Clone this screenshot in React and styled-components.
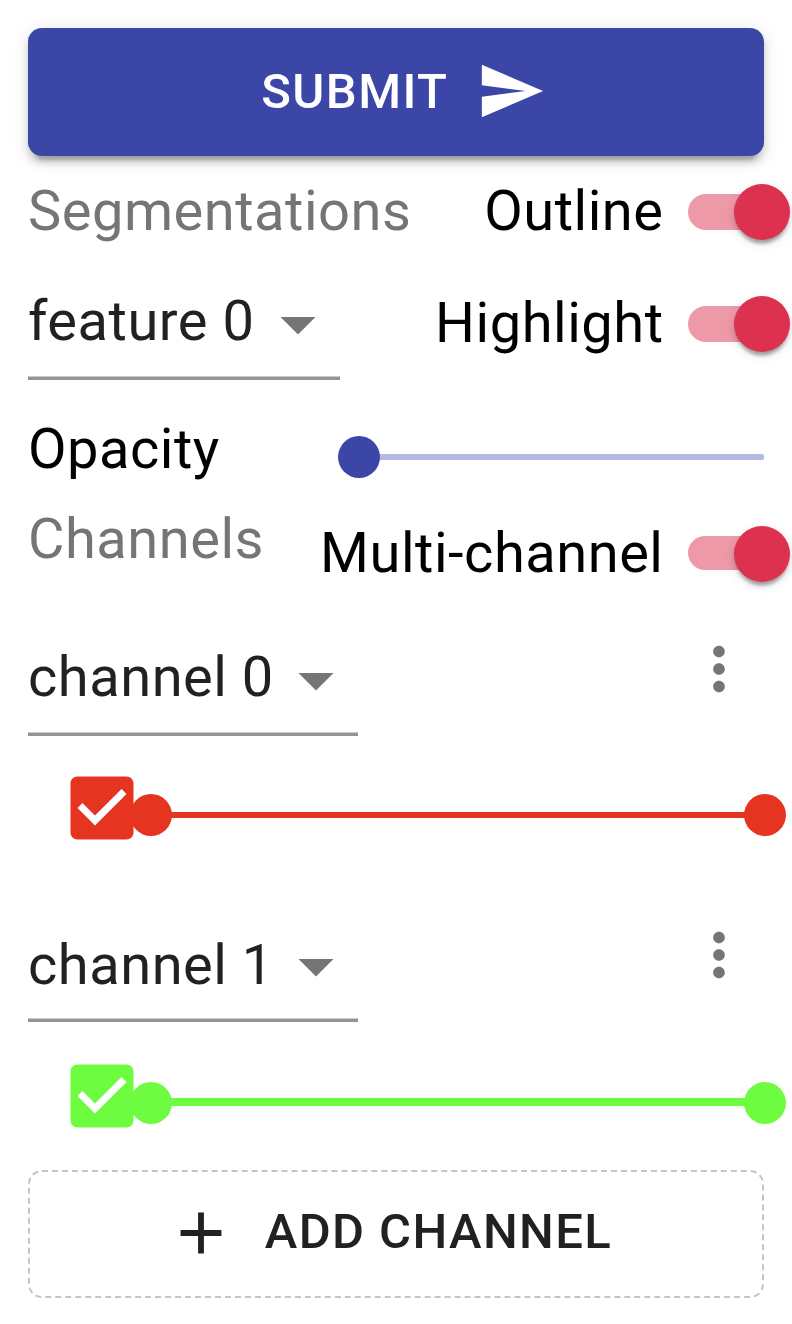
import React from "react";
import styled, { createGlobalStyle } from "styled-components";

const GlobalStyle = createGlobalStyle`
  * { box-sizing: border-box; }
  body {
    margin: 0;
    background: #fff;
    font-family: Roboto, "Liberation Sans", sans-serif;
  }
`;

const Panel = styled.main`
  width: 792px;
  height: 1324px;
  padding: 28px;
  overflow: hidden;
  display: flex;
  flex-direction: column;
`;

const Button = styled.button`
  display: flex;
  align-items: center;
  justify-content: center;
  flex: none;
  height: 128px;
  padding: 0;
  border: 0;
  border-radius: 14px;
  font: 500 49px/84px Roboto, "Liberation Sans", sans-serif;
  letter-spacing: 0.02857em;
  text-transform: uppercase;
`;

const SubmitButton = styled(Button)`
  gap: 28px;
  padding: 0 0 2px 15.5px;
  background: #3c46a6;
  color: #fff;
  box-shadow: 0 10.5px 3.5px -7px rgba(0, 0, 0, 0.2),
    0 7px 7px rgba(0, 0, 0, 0.14), 0 3.5px 17.5px rgba(0, 0, 0, 0.12);
`;

const AddButton = styled(Button)`
  gap: 29px;
  margin-top: 22px;
  padding: 0 14px 2px 0;
  background: transparent;
  border: 2px dashed #c4c4c4;
  color: #212121;
`;

const ButtonLabel = styled.span`
  padding-top: ${(p) => p.$drop || 0}px;
  padding-bottom: ${(p) => p.$lift || 0}px;
`;

const Row = styled.div`
  display: flex;
  flex: none;
  justify-content: space-between;
  align-items: flex-start;
  height: ${(p) => p.$height}px;
`;

const Text = styled.span`
  font-size: 56px;
  line-height: 84px;
  letter-spacing: 0.00938em;
  white-space: nowrap;
  color: ${(p) => p.$color || "#000"};
  margin-top: ${(p) => p.$top || 0}px;
`;

const SwitchLabel = styled.label`
  display: flex;
  align-items: center;
  gap: 24.5px;
  height: 112px;
  margin-right: -26px;
`;

const Track = styled.span`
  display: flex;
  align-items: center;
  width: 102px;
  height: 56px;
  &::before {
    content: "";
    width: 91px;
    height: ${(p) => p.$height || 36}px;
    border-radius: 18px;
    background: #ee99a8;
    margin-bottom: ${(p) => (p.$height ? 2 : 0)}px;
  }
`;

const Thumb = styled.span`
  width: 56px;
  height: 56px;
  margin-left: -45px;
  border-radius: 50%;
  background: #dc3250;
  box-shadow: 0 7px 3.5px -3.5px rgba(0, 0, 0, 0.2),
    0 3.5px 3.5px rgba(0, 0, 0, 0.14), 0 3.5px 10.5px rgba(0, 0, 0, 0.12);
`;

const SelectBox = styled.div`
  display: flex;
  justify-content: space-between;
  width: ${(p) => p.$width}px;
  height: ${(p) => p.$height}px;
  border-bottom: 3px solid #949494;
  box-shadow: inset 0 -1px #cacaca;
`;

const Arrow = styled.svg`
  width: 84px;
  height: 84px;
  margin-top: ${(p) => p.$top}px;
  fill: #757575;
`;

const RangeSlider = styled.div`
  display: flex;
  align-items: center;
  justify-content: space-between;
  height: 42px;
  width: 656px;
  margin: ${(p) => p.$top}px -22px 0 -14px;
  color: ${(p) => p.$color};
  background: linear-gradient(currentColor, currentColor) no-repeat
    21px ${(p) => p.$lineTop}px / calc(100% - 42px) ${(p) => p.$thick}px;
`;

const OpacitySlider = styled.div`
  display: flex;
  align-items: center;
  width: 426px;
  height: 42px;
  margin-top: 56px;
  color: #3c46a6;
  &::after {
    content: "";
    flex: 1;
    height: 6px;
    margin-left: -4px;
    border-radius: 2px;
    background: #b5b8df;
  }
`;

const SliderThumb = styled.span`
  position: relative;
  z-index: 1;
  width: 42px;
  height: 42px;
  border-radius: 50%;
  background: currentColor;
`;

const Channel = styled.section`
  flex: none;
  height: ${(p) => p.$height}px;
`;

const ChannelControls = styled.div`
  display: flex;
  align-items: flex-start;
  padding-left: 32px;
`;

const CheckIcon = styled.svg`
  flex: none;
  width: 84px;
  height: 84px;
  margin-top: ${(p) => p.$top}px;
  fill: ${(p) => p.$color};
`;

const Icon = styled.svg`
  flex: none;
  width: 70px;
  height: 70px;
  fill: ${(p) => p.$color || "currentColor"};
`;

const MenuIcon = styled(Icon)`
  margin: 24px 10px 0 0;
`;

function Toggle({ label, trackHeight }) {
  return (
    <SwitchLabel>
      <Text $top={-2}>{label}</Text>
      <Track $height={trackHeight}>
        <Thumb />
      </Track>
    </SwitchLabel>
  );
}

function Select({ value, width, height, textTop, arrowTop }) {
  return (
    <SelectBox $width={width} $height={height}>
      <Text $color="#212121" $top={textTop}>{value}</Text>
      <Arrow viewBox="0 0 24 24" $top={arrowTop}>
        <path d="M7 10l5 5 5-5z" />
      </Arrow>
    </SelectBox>
  );
}

const channels = [
  { name: "channel 0", color: "#e5341f", height: 286, textTop: 25, checkTop: 29.5, sliderTop: 58, lineTop: 18, thick: 6 },
  { name: "channel 1", color: "#6dfc3f", height: 252, textTop: 27, checkTop: 31.5, sliderTop: 60, lineTop: 16, thick: 8 },
];

export default function App() {
  return (
    <>
      <GlobalStyle />
      <Panel>
        <SubmitButton>
          <ButtonLabel $drop={2}>Submit</ButtonLabel>
          <Icon viewBox="0 0 24 24">
            <path d="M2.01 21L23 12 2.01 3 2 10l15 2-15 2z" />
          </Icon>
        </SubmitButton>
        <Row $height={112}>
          <Text $color="#757575" $top={13}>Segmentations</Text>
          <Toggle label="Outline" />
        </Row>
        <Row $height={112}>
          <Select value="feature 0" width={312} height={112} textTop={11} arrowTop={14} />
          <Toggle label="Highlight" />
        </Row>
        <Row $height={118}>
          <Text $top={27}>Opacity</Text>
          <OpacitySlider>
            <SliderThumb />
          </OpacitySlider>
        </Row>
        <Row $height={112}>
          <Text $color="#757575" $top={-1}>Channels</Text>
          <Toggle label="Multi-channel" trackHeight={34} />
        </Row>
        {channels.map((c) => (
          <Channel key={c.name} $height={c.height}>
            <Row $height={126}>
              <Select value={c.name} width={330} height={126} textTop={c.textTop} arrowTop={28} />
              <MenuIcon viewBox="0 0 24 24" $color="#757575">
                <path d="M12 8c1.1 0 2-.9 2-2s-.9-2-2-2-2 .9-2 2 .9 2 2 2zm0 2c-1.1 0-2 .9-2 2s.9 2 2 2 2-.9 2-2-.9-2-2-2zm0 6c-1.1 0-2 .9-2 2s.9 2 2 2 2-.9 2-2-.9-2-2-2z" />
              </MenuIcon>
            </Row>
            <ChannelControls>
              <CheckIcon viewBox="0 0 24 24" $color={c.color} $top={c.checkTop}>
                <path d="M19 3H5c-1.11 0-2 .9-2 2v14c0 1.1.89 2 2 2h14c1.11 0 2-.9 2-2V5c0-1.1-.89-2-2-2zm-9 14l-5-5 1.41-1.41L10 14.17l7.59-7.59L19 8l-9 9z" />
              </CheckIcon>
              <RangeSlider $color={c.color} $top={c.sliderTop} $lineTop={c.lineTop} $thick={c.thick}>
                <SliderThumb />
                <SliderThumb />
              </RangeSlider>
            </ChannelControls>
          </Channel>
        ))}
        <AddButton>
          <Icon viewBox="0 0 24 24">
            <path d="M19 13h-6v6h-2v-6H5v-2h6V5h2v6h6v2z" />
          </Icon>
          <ButtonLabel $lift={2}>Add channel</ButtonLabel>
        </AddButton>
      </Panel>
    </>
  );
}
